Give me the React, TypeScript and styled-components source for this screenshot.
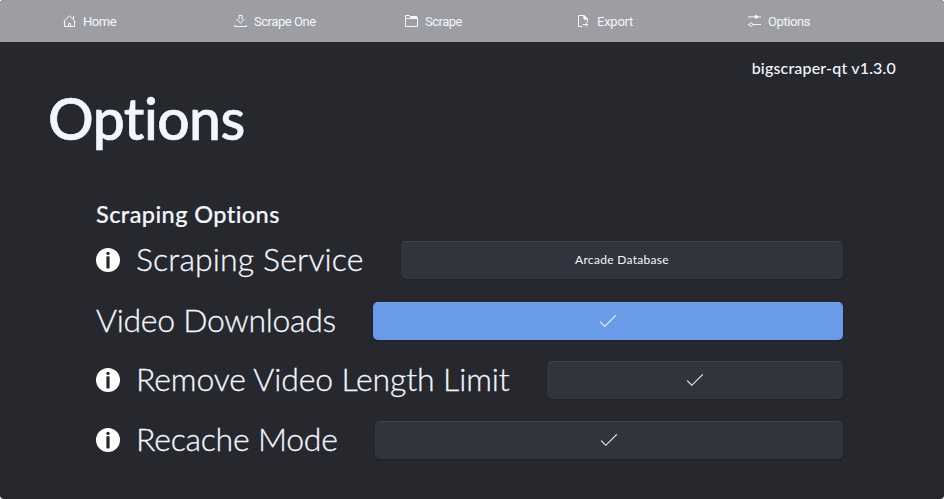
import React from "react";
import styled, { createGlobalStyle } from "styled-components";

const Global = createGlobalStyle`
  html, body { margin: 0; padding: 0; background: #fff; }
  * { box-sizing: border-box; }
`;

const Window = styled.div`
  width: 944px;
  height: 499px;
  overflow: hidden;
  border-radius: 4px;
  background: #27282d;
  color: #f2f6ff;
  font-family: Lato, "Open Sans", sans-serif;
`;

const Nav = styled.nav`
  display: grid;
  grid-template-columns: 171px 171px 172px 171px 171px;
  align-items: center;
  height: 42px;
  padding-left: 63px;
  background: #9d9ea3;
`;

const NavItem = styled.a<{ $spacing: number }>`
  display: flex;
  align-items: center;
  gap: 7px;
  color: #f4f6fb;
  font: 400 13px/16px Roboto, sans-serif;
  letter-spacing: ${(p) => p.$spacing}px;
  white-space: nowrap;
  svg { display: block; flex: none; }
`;

const NavLabel = styled.span`
  padding-top: 1px;
`;

const Version = styled.div`
  height: 20px;
  margin: 16px 48px 0 0;
  text-align: right;
  font-size: 16px;
  font-weight: 500;
  line-height: 20px;
  letter-spacing: 0.18px;
`;

const Title = styled.h1`
  height: 70px;
  margin: 5px 0 0 48px;
  font-size: 57px;
  font-weight: 500;
  line-height: 70px;
  letter-spacing: -0.55px;
  -webkit-text-stroke: 0.7px #f2f6ff;
`;

const Section = styled.section`
  margin: 47px 101px 0 96px;
`;

const SectionTitle = styled.h2`
  height: 28px;
  margin: 0 0 13px;
  font-size: 23.5px;
  font-weight: 500;
  line-height: 28px;
  letter-spacing: 0.42px;
  -webkit-text-stroke: 0.2px #f2f6ff;
`;

const Row = styled.div<{ $gap: number }>`
  display: flex;
  align-items: center;
  height: 38px;
  margin-bottom: ${(p) => p.$gap}px;
`;

const Label = styled.span<{ $width: number; $spacing: number }>`
  flex: none;
  width: ${(p) => p.$width}px;
  padding-bottom: 2px;
  font-size: 32px;
  font-weight: 300;
  line-height: 36px;
  letter-spacing: ${(p) => p.$spacing}px;
  white-space: nowrap;
  -webkit-text-stroke: 0.3px #f2f6ff;
`;

const InfoBadge = styled.svg`
  flex: none;
  width: 24px;
  height: 24px;
  margin-right: 16px;
`;

const Field = styled.button<{ $active?: boolean }>`
  display: flex;
  flex: 1;
  align-items: center;
  justify-content: center;
  height: 38px;
  padding: 0;
  border: 1px solid ${(p) => (p.$active ? "#699be8" : "#34363c")};
  border-top-color: ${(p) => (p.$active ? "#78a5eb" : "#414247")};
  border-radius: 5px;
  background: ${(p) => (p.$active ? "#699be8" : "#31343c")};
  box-shadow: 0 1px 2px rgba(0, 0, 0, 0.2);
  color: #f2f6ff;
  font: 400 12px/16px Lato, sans-serif;
  letter-spacing: 0.3px;
`;

const Glyph = ({ children }: { children: React.ReactNode }) => (
  <svg width="13" height="12" viewBox="0 0 13 12" fill="none" stroke="#f4f6fb" strokeWidth="1">
    {children}
  </svg>
);

const HomeIcon = () => (
  <Glyph>
    <path d="M.5 6.7 6.5.8 12.5 6.7M1.5 6v5.5h10V6M10.5 4V1M5.5 11.5v-3h2v3" />
  </Glyph>
);
const DownloadIcon = () => (
  <Glyph>
    <path d="M5 4.5v-4h3v4M2.5 4 6.5 8.4l4-4.4M.5 10v1.5h12V10" />
  </Glyph>
);
const FolderIcon = () => (
  <Glyph>
    <path d="M.5 11.5V.5h4l1 2h7v9zM.5 3.5h12" />
    <path d="M5 1h7v2.5H6z" fill="#f4f6fb" stroke="none" />
  </Glyph>
);
const ExportIcon = () => (
  <Glyph>
    <path d="M5.5 11.5h-4V.5H7l3.5 3.4v3M7 .5V4h3.5M5.5 9.5h5.2M8.5 7.2l2.4 2.3-2.4 2.3" />
    <path d="M7 .7v3.2h3.5z" fill="#f4f6fb" />
  </Glyph>
);
const SlidersIcon = () => (
  <Glyph>
    <path d="M0 1.9h13M4.8 9.5H13M0 9.5h1.3" />
    <circle cx="8.2" cy="1.9" r="1.4" fill="#f4f6fb" />
    <circle cx="3" cy="9.5" r="1.6" />
  </Glyph>
);

const Info = () => (
  <InfoBadge viewBox="0 0 24 24">
    <circle cx="12" cy="12" r="12" fill="#fff" />
    <circle cx="12" cy="5.4" r="1.7" fill="#27282d" />
    <rect x="10.4" y="8.2" width="3.2" height="12.3" rx="0.8" fill="#27282d" />
  </InfoBadge>
);

const Check = () => (
  <svg width="18" height="14" viewBox="0 0 18 14" fill="none" stroke="#f2f6ff" strokeWidth="1.1">
    <path d="M1.2 7.7 5.8 12.3 16.8 1.3" />
  </svg>
);

const navItems = [
  { label: "Home", icon: <HomeIcon />, spacing: -0.45 },
  { label: "Scrape One", icon: <DownloadIcon />, spacing: -0.46 },
  { label: "Scrape", icon: <FolderIcon />, spacing: -0.5 },
  { label: "Export", icon: <ExportIcon />, spacing: -0.25 },
  { label: "Options", icon: <SlidersIcon />, spacing: -0.4 },
];

const rows = [
  { label: "Scraping Service", info: true, width: 265, spacing: 0.13, gap: 23, value: "Arcade Database" },
  { label: "Video Downloads", info: false, width: 277, spacing: -0.3, gap: 21, active: true },
  { label: "Remove Video Length Limit", info: true, width: 411, spacing: -0.13, gap: 22 },
  { label: "Recache Mode", info: true, width: 239, spacing: -0.23, gap: 0 },
];

export default function App() {
  return (
    <>
      <Global />
      <Window>
        <Nav>
          {navItems.map((item) => (
            <NavItem key={item.label} $spacing={item.spacing}>
              {item.icon}
              <NavLabel>{item.label}</NavLabel>
            </NavItem>
          ))}
        </Nav>
        <Version>bigscraper-qt v1.3.0</Version>
        <Title>Options</Title>
        <Section>
          <SectionTitle>Scraping Options</SectionTitle>
          {rows.map((row) => (
            <Row key={row.label} $gap={row.gap}>
              {row.info && <Info />}
              <Label $width={row.width} $spacing={row.spacing}>{row.label}</Label>
              <Field $active={row.active}>{row.value ?? <Check />}</Field>
            </Row>
          ))}
        </Section>
      </Window>
    </>
  );
}
